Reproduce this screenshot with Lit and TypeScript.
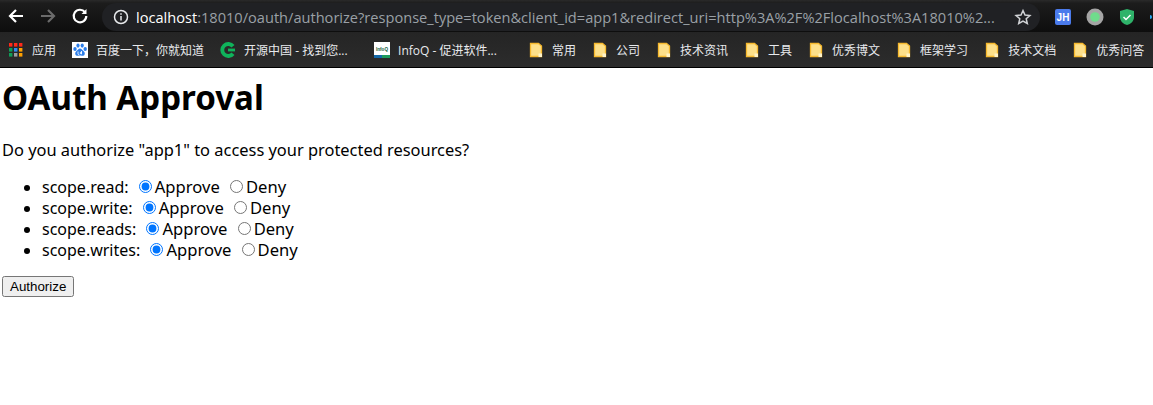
import { LitElement, html, css, svg } from "lit";
import { customElement } from "lit/decorators.js";

const appsIcon = svg`<svg class="ic" viewBox="0 0 16 16">
${[["#ff2a1a","#ff2a1a","#ff2a1a"],["#0f9d58","#2f8cf0","#ffa000"],["#0f9d58","#9aa0a6","#ffa000"]].map((r,y)=>r.map((c,x)=>svg`<rect x=${1+x*5} y=${1+y*5} width="3.4" height="3.6" fill=${c}/>`))}
</svg>`;
const baiduIcon = svg`<svg class="ic" viewBox="0 0 16 16"><rect width="16" height="16" fill="#fff"/>
<g fill="#2b7de9"><ellipse cx="3" cy="7" rx="1.7" ry="2.1"/><ellipse cx="6" cy="3.6" rx="1.6" ry="2.1"/><ellipse cx="10.2" cy="3.6" rx="1.6" ry="2.1"/><ellipse cx="13.2" cy="7" rx="1.7" ry="2.1"/>
<path d="M8 6.500c-1.600 0-2.300 1.600-3.400 2.600-1.200 1-1.700 2-1.200 3.300.5 1.300 1.800 1.600 2.900 1.300.9-.2 2.500-.2 3.400 0 1.100.3 2.400 0 2.900-1.300.5-1.300 0-2.300-1.200-3.300C10.300 8.100 9.600 6.500 8 6.500z"/></g>
<path d="M6 9.500v2.300c0 .8 1 1 1.400.2M9.500 9v3.300M8 11c0-.8 1.500-.8 1.500 0s-1.500.8-1.500 0" fill="none" stroke="#fff" stroke-width=".9"/></svg>`;
const cIcon = svg`<svg class="ic" viewBox="0 0 16 16"><path d="M13 4.300A6 6 0 1 0 13 11.700" fill="none" stroke="#0fb35b" stroke-width="3.900"/><rect x="8" y="6.600" width="7" height="2.800" fill="#0fb35b"/></svg>`;
const infoqIcon = svg`<svg class="ic" viewBox="0 0 16 16"><rect width="16" height="16" fill="#fff"/><rect y="13" width="8" height="3" fill="#1368a8"/><rect x="8" y="13" width="8" height="3" fill="#1d9a5c"/>
<text x="8" y="9" font-size="4.600" font-weight="700" text-anchor="middle" font-family="Liberation Sans" fill="#14603c">InfoQ</text></svg>`;
const folderIcon = svg`<svg class="ic" viewBox="0 0 16 16"><path d="M2.500 1.500h8l3 2.500v10.500h-11z" fill="#fde08a" stroke="#f6b92e" stroke-width="1.300"/><rect x="10.500" y="11.500" width="3.500" height="3.500" fill="#fff3c8"/></svg>`;

const bookmarks: [unknown, string, string][] = [
  [appsIcon, "应用", ""],
  [baiduIcon, "百度一下，你就知道", ""],
  [cIcon, "开源中国 - 找到您...", "trunc"],
  [infoqIcon, "InfoQ - 促进软件...", "trunc"],
  [folderIcon, "常用", ""],
  [folderIcon, "公司", ""],
  [folderIcon, "技术资讯", ""],
  [folderIcon, "工具", ""],
  [folderIcon, "优秀博文", ""],
  [folderIcon, "框架学习", ""],
  [folderIcon, "技术文档", ""],
  [folderIcon, "优秀问答", ""],
];

const scopes = ["scope.read", "scope.write", "scope.reads", "scope.writes"];

@customElement("app-root")
export class AppRoot extends LitElement {
  static styles = css`
    :host { display: block; background: #fff; color: #000; font-family: "Noto Sans", "Open Sans", sans-serif; font-size: 16px; }
    .chrome { height: 68px; box-sizing: border-box; border-bottom: 1px solid #000; background: linear-gradient(#1e1e1e, #2c2c2c); display: flex; flex-direction: column; overflow: hidden; }
    .toolbar { height: 32px; flex: none; display: flex; align-items: flex-start; background: linear-gradient(#2a2a2a 0, #1c1c1c 10%, #0e0e0e 100%); padding-top: 3px; box-sizing: border-box; overflow: hidden; }
    .nav { width: 102px; flex: none; display: flex; padding: 2px 0 0 5px; box-sizing: border-box; gap: 10px; }
    .nav svg { width: 22px; height: 22px; flex: none; }
    .omni { width: 938px; height: 28px; flex: none; box-sizing: border-box; background: #202124; border-radius: 14px; display: flex; align-items: center; padding: 0 8px 0 11px; }
    .omni .info { width: 16px; height: 16px; flex: none; margin-right: 7px; }
    .url { flex: 1; font-size: 14.600px; white-space: nowrap; overflow: hidden; color: #9aa0a6; font-family: "Open Sans", "Liberation Sans", sans-serif; }
    .url b { font-weight: 400; color: #fff; }
    .omni .star { width: 18px; height: 18px; flex: none; }
    .ext { display: flex; align-items: center; height: 28px; gap: 14px; padding-left: 14px; flex: none; }
    .ext svg { width: 18px; height: 18px; flex: none; }
    .bar { flex: 1; display: flex; align-items: center; padding: 0 0 0 8px; gap: 16px; color: #e8eaed; font-size: 12px; font-family: "Open Sans", "Noto Sans CJK SC", "Liberation Sans", sans-serif; white-space: nowrap; }
    .bm { display: flex; align-items: center; gap: 8px; }
    .bm.trunc { width: 130px; margin-right: 8px; }
    .bm.trunc + .bm.trunc { width: 126px; margin-right: 12px; }
    .ic { width: 16px; height: 16px; flex: none; }
    .page { padding: 0 2px; }
    h1 { font-size: 33.100px; font-weight: 700; margin: 9px 0 0; line-height: 41px; }
    p { margin: 21px 0 0; line-height: 21px; font-size: 16.420px; }
    ul { margin: 17px 0 0; padding: 0 0 0 40px; }
    li { line-height: 21px; }
    .opt { font-size: 16.600px; line-height: 1; }
    input { margin: 3px 3px 0 6px; }
    form { margin: 0; }
    .btn { margin-top: 15px; display: block; font: 13.333px "Liberation Sans", Arial, sans-serif; padding: 1px 6px; height: 21px; width: 72px; }
  `;

  render() {
    return html`
      <div class="chrome">
        <div class="toolbar">
          <div class="nav">
            <svg viewBox="0 0 22 22" fill="none" stroke="#fff" stroke-width="2.200"><path d="M18 11H5M11 5L5 11l6 6"/></svg>
            <svg viewBox="0 0 22 22" fill="none" stroke="#6b6b6b" stroke-width="2.200"><path d="M4 11h13M11 5l6 6-6 6"/></svg>
            <svg viewBox="0 0 22 22" fill="none" stroke="#fff" stroke-width="2.200"><path d="M16 7.200A6.300 6.300 0 1 0 17.300 11"/><path d="M17.500 4v5h-5z" fill="#fff" stroke="none"/></svg>
          </div>
          <div class="omni">
            <svg class="info" viewBox="0 0 16 16" fill="none" stroke="#e8eaed" stroke-width="1.500"><circle cx="8" cy="8" r="6.500"/><path d="M8 7v4.500M8 4.200v1.600"/></svg>
            <div class="url"><b>localhost</b>:18010/oauth/authorize?response_type=token&client_id=app1&redirect_uri=http%3A%2F%2Flocalhost%3A18010%2...</div>
            <svg class="star" viewBox="0 0 18 18" fill="none" stroke="#d0d2d5" stroke-width="1.500"><path d="M9 2.500l2 4.500 4.900.5-3.700 3.200 1.100 4.800L9 13l-4.300 2.500 1.100-4.800-3.700-3.200L7 7z"/></svg>
          </div>
          <div class="ext">
            <svg viewBox="0 0 18 18"><rect x="1" y="1" width="16" height="16" rx="2" fill="#4b7bec"/><text x="9" y="13" font-size="10" font-weight="700" text-anchor="middle" font-family="Liberation Sans" fill="#fff">JH</text></svg>
            <svg viewBox="0 0 18 18"><circle cx="9" cy="9" r="8.500" fill="#a5a5a5"/><circle cx="9" cy="9" r="4.800" fill="#6fdc8c"/></svg>
            <svg viewBox="0 0 18 18"><path d="M9 1l7 2v6c0 4-3 7-7 8-4-1-7-4-7-8V3z" fill="#2fb36a"/><path d="M5.500 9l2.500 2.500 4.500-4.500" fill="none" stroke="#fff" stroke-width="1.500"/></svg>
            <svg viewBox="0 0 18 18"><circle cx="0" cy="9" r="2" fill="#2aa8f2"/></svg>
          </div>
        </div>
        <div class="bar">
          ${bookmarks.map(([icon, label, cls]) => html`<div class="bm ${cls}">${icon}<span>${label}</span></div>`)}
        </div>
      </div>
      <div class="page">
        <h1>OAuth Approval</h1>
        <p>Do you authorize "app1" to access your protected resources?</p>
        <form>
          <ul>
            ${scopes.map((s) => html`<li>${s}:&nbsp;<input type="radio" name=${s} checked /><span class="opt">Approve</span> <input type="radio" name=${s} /><span class="opt">Deny</span></li>`)}
          </ul>
          <button class="btn" type="button">Authorize</button>
        </form>
      </div>
    `;
  }
}
